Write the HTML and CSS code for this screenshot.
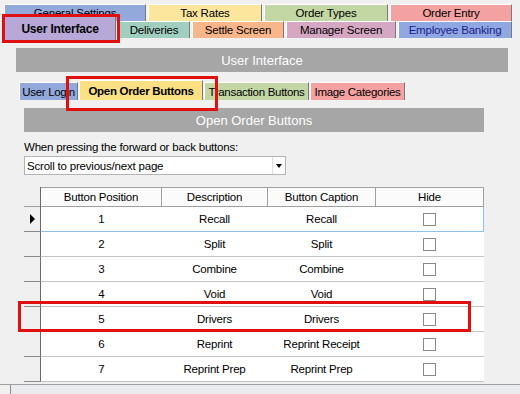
FILE: index.html
```html
<!DOCTYPE html>
<html lang="en">
  <head>
    <meta charset="UTF-8" />
    <meta name="viewport" content="width=device-width, initial-scale=1.0" />
    <title>User Interface</title>
    <link rel="stylesheet" href="styles.css">
  </head>
  <body>
    <div class="tabstrip">
      <div class="tab-row back">
        <div class="tab general">General Settings</div>
        <div class="tab tax">Tax Rates</div>
        <div class="tab types">Order Types</div>
        <div class="tab entry">Order Entry</div>
      </div>
      <div class="tab-row front">
        <div class="tab ui selected">User Interface</div>
        <div class="tab deliveries">Deliveries</div>
        <div class="tab settle">Settle Screen</div>
        <div class="tab manager">Manager Screen</div>
        <div class="tab banking">Employee Banking</div>
      </div>
    </div>

    <div class="page">
      <div class="bar main-bar">User Interface</div>

      <div class="subtabs">
        <div class="subtab login">User Login</div>
        <div class="subtab open selected">Open Order Buttons</div>
        <div class="subtab trans">Transaction Buttons</div>
        <div class="subtab images">Image Categories</div>
      </div>

      <div class="inner">
        <div class="bar inner-bar">Open Order Buttons</div>
        <div class="field-label">When pressing the forward or back buttons:</div>
        <div class="select">
          <span>Scroll to previous/next page</span>
          <span class="drop"><span class="caret"></span></span>
        </div>

        <table class="grid">
          <thead>
            <tr>
              <th class="corner"></th>
              <th class="c-pos">Button Position</th>
              <th class="c-desc">Description</th>
              <th class="c-cap">Button Caption</th>
              <th class="c-hide">Hide</th>
            </tr>
          </thead>
          <tbody>
            <tr class="current">
              <td class="rowhead"><span class="pointer"></span></td>
              <td>1</td><td>Recall</td><td>Recall</td>
              <td><span class="check"></span></td>
            </tr>
            <tr>
              <td class="rowhead"></td>
              <td>2</td><td>Split</td><td>Split</td>
              <td><span class="check"></span></td>
            </tr>
            <tr>
              <td class="rowhead"></td>
              <td>3</td><td>Combine</td><td>Combine</td>
              <td><span class="check"></span></td>
            </tr>
            <tr>
              <td class="rowhead"></td>
              <td>4</td><td>Void</td><td>Void</td>
              <td><span class="check"></span></td>
            </tr>
            <tr>
              <td class="rowhead"></td>
              <td>5</td><td>Drivers</td><td>Drivers</td>
              <td><span class="check"></span></td>
            </tr>
            <tr>
              <td class="rowhead"></td>
              <td>6</td><td>Reprint</td><td>Reprint Receipt</td>
              <td><span class="check"></span></td>
            </tr>
            <tr>
              <td class="rowhead"></td>
              <td>7</td><td>Reprint Prep</td><td>Reprint Prep</td>
              <td><span class="check"></span></td>
            </tr>
          </tbody>
        </table>
      </div>
    </div>

    <div class="status"><div class="status-cell"></div></div>

    <div class="mark mark-tab"></div>
    <div class="mark mark-subtab"></div>
    <div class="mark mark-row"></div>
  </body>
</html>
```

FILE: styles.css
```css
body {
  margin: 0;
  background-color: #f0f0f0;
  font-family: "Liberation Sans", Arial, sans-serif;
  font-size: 11px;
  color: #000;
  position: relative;
  width: 520px;
  height: 394px;
  overflow: hidden;
}

/* top tab strip */
.tabstrip {
  padding: 4px 0 0 4px;
}

.tab-row {
  display: flex;
  gap: 2px;
}

.tab-row.front {
  height: 19px;
}

.tab {
  height: 17px;
  box-sizing: border-box;
  display: flex;
  align-items: center;
  justify-content: center;
  border-top: 1px solid #fff;
  border-left: 1px solid #fff;
  border-right: 1px solid #7a7a7a;
  font-size: 11.5px;
  letter-spacing: -0.2px;
}

.tab.selected {
  height: 24px;
  margin-top: -5px;
  font-weight: bold;
  font-size: 12px;
}

.general { width: 142px; background-color: #93a9db; }
.tax { width: 114px; background-color: #fce69e; }
.types { width: 124px; background-color: #c3d7a4; }
.entry { width: 122px; background-color: #f3a2a1; }

.ui { width: 112px; background-color: #b7a8d8; }
.deliveries { width: 72px; background-color: #a0cfbf; }
.settle { width: 92px; background-color: #f8b68a; }
.manager { width: 110px; background-color: #d6a7c3; }
.banking { width: 114px; background-color: #8fa8e1; color: #1c1c8a; }

/* main page */
.page {
  padding: 8px 12px 0 16px;
}

.bar {
  height: 24px;
  background-color: #a6a6a6;
  color: #fff;
  font-size: 13px;
  display: flex;
  align-items: center;
  justify-content: center;
}

.subtabs {
  display: flex;
  gap: 1px;
  margin: 10px 0 0 3px;
  height: 18px;
  align-items: flex-start;
}

.subtab {
  height: 18px;
  box-sizing: border-box;
  display: flex;
  align-items: center;
  justify-content: center;
  border-top: 1px solid #fff;
  border-left: 1px solid #fff;
  border-right: 1px solid #7a7a7a;
  font-size: 11.5px;
  letter-spacing: -0.3px;
  white-space: nowrap;
  overflow: hidden;
}

.subtab.selected {
  height: 20px;
  margin-top: -2px;
  font-weight: bold;
}

.login { width: 59px; background-color: #93a9db; }
.open { width: 124px; background-color: #fbe084; }
.trans { width: 105px; background-color: #c3d7a4; }
.images { width: 95px; background-color: #f3a2a1; }

.inner {
  padding: 8px 0 0 8px;
  width: 460px;
}

.field-label {
  margin-top: 8px;
  line-height: 14px;
  font-size: 11.5px;
  letter-spacing: -0.2px;
}

.select {
  margin-top: 2px;
  width: 262px;
  height: 19px;
  box-sizing: border-box;
  background-color: #fff;
  border: 1px solid #b4b4b4;
  display: flex;
  align-items: center;
  justify-content: space-between;
  padding-left: 2px;
  font-size: 11.5px;
  letter-spacing: -0.2px;
}

.drop {
  width: 12px;
  height: 17px;
  border-left: 1px solid #e0e0e0;
  display: flex;
  align-items: center;
  justify-content: center;
}

.caret {
  width: 0;
  height: 0;
  border-left: 3px solid transparent;
  border-right: 3px solid transparent;
  border-top: 4px solid #000;
}

/* data grid */
.grid {
  margin-top: 12px;
  width: 460px;
  border-collapse: collapse;
  table-layout: fixed;
  font-size: 11.5px;
  letter-spacing: -0.2px;
}

.grid th {
  height: 18px;
  padding: 0;
  font-weight: normal;
  background-color: #fbfbfb;
  border: 1px solid #a0a0a0;
}

.grid th.corner {
  width: 16px;
  background-color: #f0f0f0;
  border-top: none;
  border-left: none;
  border-bottom: none;
  border-right: 1px solid #6a6a6a;
}

.c-pos { width: 120px; }
.c-desc { width: 105px; }
.c-cap { width: 107px; }
.c-hide { width: 107px; }

.grid td {
  height: 24px;
  padding: 0;
  text-align: center;
  background-color: #fff;
  border-bottom: 1px solid #c4c4c4;
}

.grid td.rowhead {
  background-color: #f0f0f0;
  border-right: 1px solid #6a6a6a;
  border-bottom: 1px solid #8a8a8a;
  text-align: left;
}

.grid tr.current td {
  border-top: 1px solid #8cc2ec;
  border-bottom: 1px solid #8cc2ec;
}

.grid tr.current td:last-child {
  border-right: 1px solid #8cc2ec;
}

.grid tr.current td.rowhead {
  border-top: 1px solid #a0a0a0;
  border-bottom: 1px solid #8a8a8a;
}

.pointer {
  display: block;
  margin-left: 6px;
  width: 0;
  height: 0;
  border-top: 5px solid transparent;
  border-bottom: 5px solid transparent;
  border-left: 5px solid #000;
}

.check {
  display: inline-block;
  width: 11px;
  height: 11px;
  border: 1px solid #8a8a8a;
  background-color: #fff;
  vertical-align: middle;
}

/* bottom status strip */
.status {
  margin-top: 2px;
  border-top: 1px solid #a0a0a0;
  height: 12px;
  background-color: #e9ebef;
}

.status-cell {
  width: 10px;
  height: 12px;
  background-color: #f0f0f0;
  border-right: 1px solid #8a8a8a;
}

/* red annotation boxes */
.mark {
  position: absolute;
  border: 3px solid #e01010;
  box-sizing: border-box;
}

.mark-tab {
  left: 2px;
  top: 14px;
  width: 118px;
  height: 29px;
}

.mark-subtab {
  left: 66px;
  top: 76px;
  width: 152px;
  height: 35px;
}

.mark-row {
  left: 18px;
  top: 301px;
  width: 453px;
  height: 31px;
}
```
